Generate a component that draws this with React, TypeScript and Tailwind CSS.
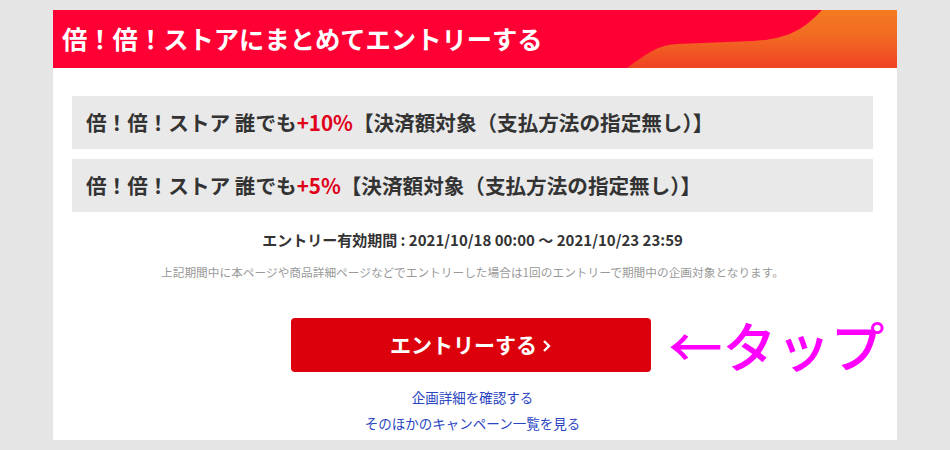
// Entry page - 倍！倍！ストア campaign entry card

const font = "font-['Noto_Sans_CJK_JP','Noto_Sans',sans-serif]";

function HeaderWave() {
  return (
    <svg
      className="absolute inset-0 h-full w-full"
      viewBox="0 0 844 58"
      preserveAspectRatio="none"
    >
      <defs>
        <linearGradient id="wave" x1="0" y1="0" x2="0" y2="1">
          <stop offset="0" stopColor="#f47a21" />
          <stop offset="0.45" stopColor="#f26a22" />
          <stop offset="1" stopColor="#f04224" />
        </linearGradient>
      </defs>
      <path
        d="M574 58 C592 45 604 35 624 34 L700 31 C735 29 750 20 769 0 L844 0 L844 58 Z"
        fill="url(#wave)"
      />
    </svg>
  );
}

function OfferRow({ rate }: { rate: string }) {
  return (
    <div className="flex h-[53px] items-center bg-[#e9e9e9] pl-[14px]">
      <p className="text-[20.6px] font-bold text-[#333]">
        倍！倍！ストア 誰でも<span className="text-[#e0001a]">{rate}</span>
        【決済額対象（支払方法の指定無し）】
      </p>
    </div>
  );
}

export default function App() {
  return (
    <div className={`min-h-[450px] w-[950px] bg-[#e5e5e5] pt-[10px] ${font}`}>
      <div className="ml-[53px] w-[844px] bg-white">
        {/* Header */}
        <header className="relative flex h-[58px] items-center overflow-hidden bg-[#fe0034] pl-[9px]">
          <HeaderWave />
          <h1 className="relative text-[25.3px] font-bold leading-none text-white">
            倍！倍！ストアにまとめてエントリーする
          </h1>
        </header>

        <main className="pl-[19px] pr-[24px] pt-[28px] pb-[7px]">
          {/* Offers */}
          <div className="flex flex-col gap-[10px]">
            <OfferRow rate="+10%" />
            <OfferRow rate="+5%" />
          </div>

          <p className="mt-[18px] text-center text-[15px] font-bold leading-[20px] text-[#333]">
            エントリー有効期間 : 2021/10/18 00:00 ～ 2021/10/23 23:59
          </p>
          <p className="mt-[14px] text-center text-[11.7px] leading-[16px] text-[#999]">
            上記期間中に本ページや商品詳細ページなどでエントリーした場合は1回のエントリーで期間中の企画対象となります。
          </p>

          {/* Entry button */}
          <div className="mt-[38px] grid grid-cols-[minmax(0,1fr)_360px_minmax(0,1fr)] items-center">
            <div />
            <button className="-ml-[2px] flex h-[54px] w-[360px] items-center justify-center gap-[5px] rounded-[4px] bg-[#dc000c] text-[21px] font-bold text-white">
              エントリーする
              <svg width="9" height="14" viewBox="0 0 9 14" className="mt-[2px]">
                <path d="M2 2 L7 7 L2 12" stroke="white" strokeWidth="2.4" fill="none" />
              </svg>
            </button>
            <span className="whitespace-nowrap pl-[16px] text-[54px] font-medium leading-none text-[#ff00ff]">
              ←タップ
            </span>
          </div>

          {/* Links */}
          <div className="mt-[15px] flex flex-col items-center gap-[6px] text-[13.5px] leading-[20px] text-[#2a45c0]">
            <a href="#">企画詳細を確認する</a>
            <a href="#">そのほかのキャンペーン一覧を見る</a>
          </div>
        </main>
      </div>
    </div>
  );
}
